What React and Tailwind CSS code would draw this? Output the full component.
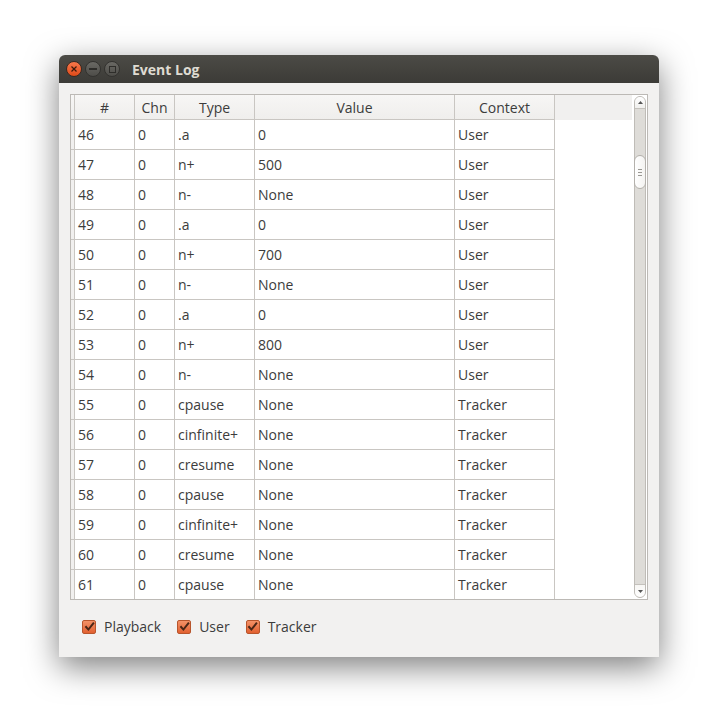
import React from 'react'

const rows = [
  [46, '.a', '0', 'User'],
  [47, 'n+', '500', 'User'],
  [48, 'n-', 'None', 'User'],
  [49, '.a', '0', 'User'],
  [50, 'n+', '700', 'User'],
  [51, 'n-', 'None', 'User'],
  [52, '.a', '0', 'User'],
  [53, 'n+', '800', 'User'],
  [54, 'n-', 'None', 'User'],
  [55, 'cpause', 'None', 'Tracker'],
  [56, 'cinfinite+', 'None', 'Tracker'],
  [57, 'cresume', 'None', 'Tracker'],
  [58, 'cpause', 'None', 'Tracker'],
  [59, 'cinfinite+', 'None', 'Tracker'],
  [60, 'cresume', 'None', 'Tracker'],
  [61, 'cpause', 'None', 'Tracker'],
]

function Check({ label }) {
  return (
    <label className="flex items-center gap-[8px]">
      <span className="w-[14px] h-[14px] rounded-[2px] border border-[#b8552c] bg-gradient-to-b from-[#f39166] to-[#e2602f] flex items-center justify-center">
        <svg width="11" height="11" viewBox="0 0 10 10">
          <path d="M1.3 4.8 L4 7.8 L9 1.5" fill="none" stroke="#4a2616" strokeWidth="1.8" />
        </svg>
      </span>
      <span>{label}</span>
    </label>
  )
}

function TitleButton({ children, close }) {
  return (
    <div className={
      close
        ? 'w-[16px] h-[16px] rounded-full bg-gradient-to-b from-[#f7774a] to-[#df4a16] border border-[#3a2a22] flex items-center justify-center'
        : 'w-[16px] h-[16px] rounded-full bg-gradient-to-b from-[#6a6964] to-[#4e4d49] border border-[#33322f] flex items-center justify-center'
    }>
      {children}
    </div>
  )
}

export default function App() {
  return (
    <div className="w-[721px] h-[727px] bg-white pt-[55px] pl-[59px]" style={{ fontFamily: '"Open Sans", sans-serif' }}>
      <div className="w-[600px] h-[602px] flex flex-col rounded-t-[6px] shadow-[0_10px_32px_rgba(0,0,0,0.5)] bg-[#f2f1f0]">
        {/* title bar */}
        <div className="h-[28px] rounded-t-[6px] bg-gradient-to-b from-[#4c4b46] to-[#3c3b37] flex items-center pl-[7px]">
          <div className="flex items-center gap-[3px]">
            <TitleButton close>
              <svg width="6" height="6" viewBox="0 0 6 6"><path d="M0.5 0.5 L5.5 5.5 M5.5 0.5 L0.5 5.5" stroke="#3b1a0c" strokeWidth="1.2" /></svg>
            </TitleButton>
            <TitleButton>
              <div className="w-[8px] h-[1.5px] bg-[#2e2d2a]" />
            </TitleButton>
            <TitleButton>
              <div className="w-[7px] h-[7px] border border-[#2e2d2a]" />
            </TitleButton>
          </div>
          <span className="ml-[12px] text-[14px] font-bold text-[#dfdbd2]">Event Log</span>
        </div>

        {/* body */}
        <div className="flex-1 px-[11px] pt-[11px] text-[14px] text-[#3c3c3c]">
          <div className="h-[506px] border border-[#bcb9b5] bg-white flex overflow-hidden">
            <div className="flex-1 flex flex-col">
              {/* header */}
              <div className="flex h-[25px] bg-gradient-to-b from-[#f7f6f5] to-[#efeeec] shrink-0">
                <div className="w-[4px] border-r border-b border-[#c9c6c2]" />
                <div className="w-[60px] border-r border-b border-[#c9c6c2] text-center leading-[25px]">#</div>
                <div className="w-[40px] border-r border-b border-[#c9c6c2] text-center leading-[25px]">Chn</div>
                <div className="w-[80px] border-r border-b border-[#c9c6c2] text-center leading-[25px]">Type</div>
                <div className="w-[200px] border-r border-b border-[#c9c6c2] text-center leading-[25px]">Value</div>
                <div className="w-[100px] border-r border-b border-[#c9c6c2] text-center leading-[25px]">Context</div>
                <div className="flex-1 bg-[#f1f0ef]" />
              </div>
              {rows.map(([n, type, value, ctx]) => (
                <div key={n} className="flex h-[30px] shrink-0">
                  <div className="w-[4px] border-r border-b border-[#c9c6c2] bg-[#f1f0ef]" />
                  <div className="w-[60px] border-r border-b border-[#c9c6c2] pl-[3px] leading-[29px]">{n}</div>
                  <div className="w-[40px] border-r border-b border-[#c9c6c2] pl-[3px] leading-[29px]">0</div>
                  <div className="w-[80px] border-r border-b border-[#c9c6c2] pl-[3px] leading-[29px]">{type}</div>
                  <div className="w-[200px] border-r border-b border-[#c9c6c2] pl-[3px] leading-[29px]">{value}</div>
                  <div className="w-[100px] border-r border-b border-[#c9c6c2] pl-[3px] leading-[29px]">{ctx}</div>
                  <div className="flex-1" />
                </div>
              ))}
            </div>

            {/* scrollbar */}
            <div className="w-[15px] pl-[2px] pr-[1px] pt-[1px] pb-[1px] bg-white shrink-0">
              <div className="h-full rounded-[6px] border border-[#bfbcb7] bg-[#dedcd8] flex flex-col relative">
                <div className="h-[12px] rounded-t-[6px] bg-gradient-to-b from-[#ffffff] to-[#f0efed] border-b border-[#c4c1bc] flex items-center justify-center">
                  <svg width="5" height="3" viewBox="0 0 5 3"><path d="M0 3 L2.5 0 L5 3 Z" fill="#555" /></svg>
                </div>
                <div className="absolute left-[-1px] right-[-1px] top-[58px] h-[34px] rounded-[6px] border border-[#b4b1ac] bg-gradient-to-r from-[#ffffff] to-[#f4f3f1] flex flex-col items-center justify-center gap-[2px]">
                  <div className="w-[4px] h-px bg-[#9a9893]" />
                  <div className="w-[4px] h-px bg-[#9a9893]" />
                  <div className="w-[4px] h-px bg-[#9a9893]" />
                </div>
                <div className="flex-1" />
                <div className="h-[13px] rounded-b-[6px] bg-gradient-to-b from-[#f7f6f4] to-[#ffffff] border-t border-[#c4c1bc] flex items-center justify-center">
                  <svg width="5" height="3" viewBox="0 0 5 3"><path d="M0 0 L2.5 3 L5 0 Z" fill="#555" /></svg>
                </div>
              </div>
            </div>
          </div>

          {/* filters */}
          <div className="flex items-center gap-[16px] pl-[12px] mt-[16px]">
            <Check label="Playback" />
            <Check label="User" />
            <Check label="Tracker" />
          </div>
        </div>
      </div>
    </div>
  )
}
